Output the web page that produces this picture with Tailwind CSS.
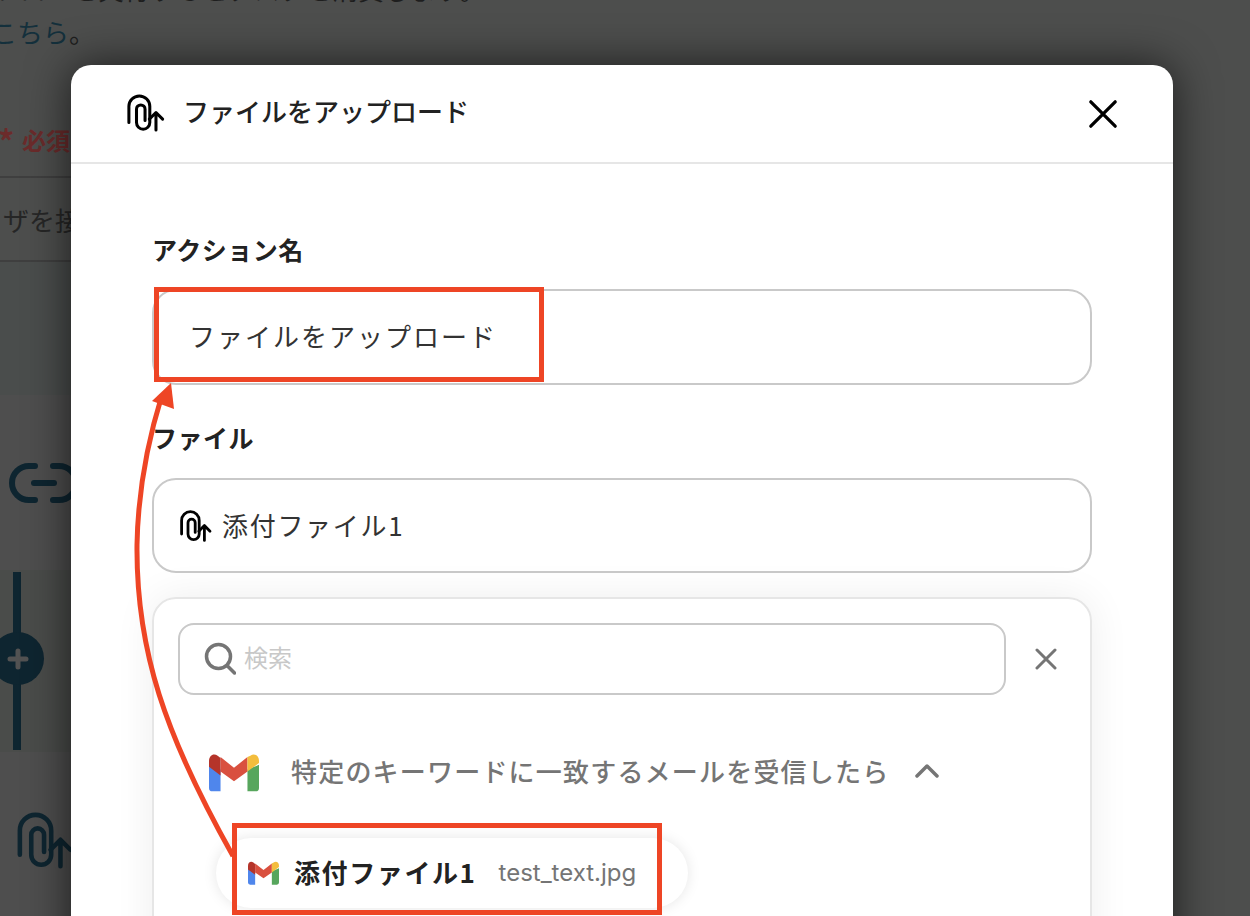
<!DOCTYPE html>
<html lang="ja">
<head>
    <meta charset="UTF-8">
    <title>ファイルをアップロード</title>
    <script src="https://cdn.jsdelivr.net/npm/@tailwindcss/browser@4"></script>
</head>
<body class="bg-[#4d4e4d]">
<div class="relative w-[1250px] h-[916px] overflow-hidden font-['Noto_Sans_CJK_JP','Noto_Sans',sans-serif]">

    <!-- page behind the dim layer -->
    <div class="w-[71px] h-full flex flex-col">
        <div class="h-[176px] shrink-0 relative">
            <p class="absolute left-[-6px] top-[-31px] text-[26px] leading-[40px] whitespace-nowrap text-[#1e1e1e]">フローを実行するとタスクを消費します。</p>
            <p class="absolute left-[-9px] top-[12px] text-[26px] leading-[40px] whitespace-nowrap text-[#14303c]">こちら<span class="text-[#1e1e1e]">。</span></p>
            <p class="absolute left-[-2px] top-[122px] flex items-center text-[24px] leading-[36px] font-bold whitespace-nowrap text-[#6b2b2b]"><span class="text-[32px] w-[24px]">*</span>必須</p>
        </div>
        <div class="h-[86px] shrink-0 border-y-2 border-[#3f3f3f] pl-[3px] pt-[24px] text-[26px] leading-[36px] whitespace-nowrap text-[#262626] overflow-hidden">ザを接続</div>
        <div class="h-[133px] shrink-0 bg-[#4a4d4c]"></div>
        <div class="h-[175px] shrink-0 flex items-center pl-[9px] bg-[#4e4e4e]">
            <svg width="70" height="40" viewBox="0 0 70 40" fill="none" stroke="#0e2530" stroke-width="6" stroke-linecap="round" class="shrink-0">
                <path d="M26 3H20a16.500 16.500 0 0 0 0 34h6"/><path d="M44 3h6a16.500 16.500 0 0 1 0 34h-6"/><path d="M25 20h20"/>
            </svg>
        </div>
        <div class="h-[182px] shrink-0 relative bg-[#4a4c4a]">
            <div class="absolute left-[13px] top-[2px] w-[8px] h-[178px] bg-[#0e2530]"></div>
            <div class="absolute left-[-9px] top-[62px] w-[53px] h-[53px] rounded-full bg-[#0e2530] flex items-center justify-center">
                <svg width="24" height="24" viewBox="0 0 24 24" fill="none" stroke="#525252" stroke-width="5" stroke-linecap="round"><path d="M12 4v16M4 12h16"/></svg>
            </div>
        </div>
        <div class="flex-1 pl-[17px] pt-[60px] bg-[#4e4e4e]">
            <svg width="57" height="57" viewBox="0 0 40 40" fill="none" stroke="#0e2530" stroke-width="3.200" stroke-linecap="round" stroke-linejoin="round">
                <path d="M2 30V13a11 11 0 0 1 22 0V30a7 7 0 0 1-14 0V16a4.500 4.500 0 0 1 9 0V28"/>
                <path d="M30.500 38V20" stroke="#4e4e4e" stroke-width="8"/>
                <path d="M30.500 38V20M23.500 26.500l7-7 7 7"/>
            </svg>
        </div>
    </div>

    <!-- modal -->
    <div class="absolute left-[71px] top-[65px] w-[1102px] h-[900px] bg-white rounded-[20px] shadow-[0_0_44px_rgba(0,0,0,0.65)]">
        <div class="h-[99px] border-b-2 border-[#e6e6e6] flex items-center pl-[56px] pr-[55px] pb-[2px]">
            <svg width="38" height="38" viewBox="0 0 40 40" fill="none" stroke="#000" stroke-width="3.200" stroke-linecap="round" stroke-linejoin="round" class="shrink-0">
                <path d="M2 30V13a11 11 0 0 1 22 0V30a7 7 0 0 1-14 0V16a4.500 4.500 0 0 1 9 0V28"/>
                <path d="M30.500 38V20" stroke="#fff" stroke-width="8"/>
                <path d="M30.500 38V20M23.500 26.500l7-7 7 7"/>
            </svg>
            <span class="ml-[18px] mt-[-3px] text-[26px] leading-[36px] font-medium text-[#222]">ファイルをアップロード</span>
            <svg class="ml-auto mt-[3px]" width="30" height="30" viewBox="0 0 32 32" fill="none" stroke="#000" stroke-width="3.500" stroke-linecap="round"><path d="M3 3l26 26M29 3L3 29"/></svg>
        </div>

        <div class="pl-[81px] pr-[81px] pt-[67px]">
            <label class="block text-[25px] leading-[36px] tracking-[0.500px] font-bold text-[#222]">アクション名</label>
            <div class="mt-[22px] h-[96px] border-2 border-[#c9c9c9] rounded-[24px] flex items-center pl-[35px] pb-[4px] text-[26px] tracking-[2px] text-[#333]">ファイルをアップロード</div>

            <label class="block mt-[34px] text-[25px] leading-[36px] tracking-[0.500px] font-bold text-[#222]">ファイル</label>
            <div class="mt-[23px] h-[95px] border-2 border-[#c9c9c9] rounded-[24px] flex items-center pl-[26px] text-[26px] tracking-[1.700px] text-[#333]">
                <svg width="32" height="32" viewBox="0 0 40 40" fill="none" stroke="#000" stroke-width="3.500" stroke-linecap="round" stroke-linejoin="round" class="shrink-0">
                    <path d="M2 30V13a11 11 0 0 1 22 0V30a7 7 0 0 1-14 0V16a4.500 4.500 0 0 1 9 0V28"/>
                    <path d="M30.500 38V20" stroke="#fff" stroke-width="8"/>
                    <path d="M30.500 38V20M23.500 26.500l7-7 7 7"/>
                </svg>
                <span class="ml-[10px] mt-[-3px]">添付ファイル1</span>
            </div>

            <div class="mt-[24px] h-[500px] border-2 border-[#e6e6e6] rounded-[24px] shadow-[0_0_40px_rgba(0,0,0,0.07)] pl-[24px] pr-[30px] pt-[24px]">
                <div class="flex items-center">
                    <div class="w-[828px] h-[72px] border-2 border-[#c9c9c9] rounded-[16px] flex items-center pl-[24px]">
                        <svg width="32" height="34" viewBox="0 0 32 34" fill="none" stroke="#757575" stroke-width="3.500" stroke-linecap="round" class="shrink-0">
                            <circle cx="14.500" cy="14.500" r="12"/><path d="M23.500 24l7 7"/>
                        </svg>
                        <span class="ml-[8px] mt-[-4px] text-[24px] text-[#c8c8c8]">検索</span>
                    </div>
                    <svg class="ml-[29px]" width="22" height="22" viewBox="0 0 22 22" fill="none" stroke="#757575" stroke-width="3" stroke-linecap="round"><path d="M2 2l18 18M20 2L2 20"/></svg>
                </div>
                <div class="mt-[58px] ml-[31px] flex items-center">
                    <svg width="50" height="39" viewBox="0 0 52 40" class="shrink-0">
                        <path d="M0 12v24a3.500 3.500 0 0 0 3.500 3.500H12V17z" fill="#4f86ec"/>
                        <path d="M40 17v22.500h8.500A3.500 3.500 0 0 0 52 36V12z" fill="#57a65d"/>
                        <path d="M12 4v15l14 10 14-10V4L26 15z" fill="#d9503f"/>
                        <path d="M0 8v6l12 9V5L9 2.500C5 -.500 0 2 0 8z" fill="#b5342a"/>
                        <path d="M40 4v15l12-9V8c0-6-5-8.500-9-5.500z" fill="#f3bd3d"/>
                    </svg>
                    <span class="ml-[32px] mt-[-4px] text-[26px] leading-[36px] font-medium tracking-[1.200px] text-[#757575] whitespace-nowrap">特定のキーワードに一致するメールを受信したら</span>
                    <svg class="ml-[26px] mt-[-4px]" width="24" height="14" viewBox="0 0 24 14" fill="none" stroke="#757575" stroke-width="3.500" stroke-linecap="round" stroke-linejoin="round"><path d="M2 12L12 2l10 10"/></svg>
                </div>
            </div>
        </div>
    </div>

    <!-- dragged chip -->
    <div class="absolute left-[216px] top-[838px] w-[472px] h-[70px] rounded-full bg-white shadow-[0_0_14px_rgba(0,0,0,0.1)] flex items-center pl-[32px]">
        <svg width="31" height="24" viewBox="0 0 52 40" class="shrink-0">
            <path d="M0 12v24a3.500 3.500 0 0 0 3.500 3.500H12V17z" fill="#4f86ec"/>
            <path d="M40 17v22.500h8.500A3.500 3.500 0 0 0 52 36V12z" fill="#57a65d"/>
            <path d="M12 4v15l14 10 14-10V4L26 15z" fill="#d9503f"/>
            <path d="M0 8v6l12 9V5L9 2.500C5 -.500 0 2 0 8z" fill="#b5342a"/>
            <path d="M40 4v15l12-9V8c0-6-5-8.500-9-5.500z" fill="#f3bd3d"/>
        </svg>
        <span class="ml-[15px] mt-[-3px] text-[26px] leading-[36px] font-bold tracking-[1.600px] text-[#222] whitespace-nowrap">添付ファイル1</span>
        <span class="ml-[22px] text-[24px] font-['Inter',sans-serif] text-[#757575] whitespace-nowrap">test_text.jpg</span>
    </div>

    <!-- annotation boxes and arrow -->
    <div class="absolute left-[154px] top-[287px] w-[390px] h-[95px] border-[5px] border-[#ee4525]"></div>
    <div class="absolute left-[232px] top-[823px] w-[430px] h-[92px] border-[5px] border-[#ee4525]"></div>
    <svg class="absolute left-0 top-0 pointer-events-none" width="1250" height="916" viewBox="0 0 1250 916" fill="none">
        <path d="M233 856C165 735 136 650 137 545C138 490 148 440 162 395" stroke="#ee4525" stroke-width="5"/>
        <path d="M171 383L174 409L152 401z" fill="#ee4525"/>
    </svg>
</div>
</body>
</html>
